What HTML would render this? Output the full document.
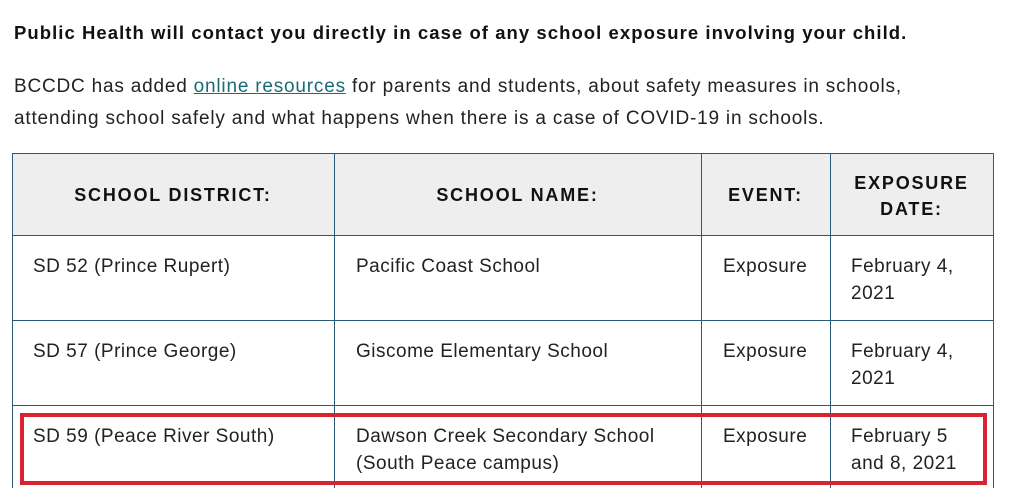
<!DOCTYPE html>
<html><head><meta charset="utf-8"><style>
body{margin:0;width:1012px;height:488px;overflow:hidden;background:#fff;font-family:"Liberation Sans",sans-serif;color:#222;position:relative}
.t{position:absolute;white-space:nowrap}
.v{position:absolute;background:#2a5a7a;width:1px}
.h{position:absolute;background:#2a5a7a;height:1px}
.hd{position:absolute;font-weight:bold;font-size:18px;letter-spacing:1.8px;text-align:center;color:#111}
.c{position:absolute;font-size:19px;line-height:27px;color:#222;letter-spacing:0.5px;white-space:nowrap}
a{color:#1a6b73;text-decoration:underline}
</style></head><body>
<div class="t" style="left:14px;top:22px;font-weight:bold;font-size:18.5px;letter-spacing:1.05px;color:#111">Public Health will contact you directly in case of any school exposure involving your child.</div>
<div class="t" style="left:14px;top:71px;font-size:19px;line-height:32px;letter-spacing:0.8px">BCCDC has added <a>online resources</a> for parents and students, about safety measures in schools,<br>attending school safely and what happens when there is a case of COVID-19 in schools.</div>
<div style="position:absolute;left:12px;top:153px;width:981px;height:82px;background:#eeeeee"></div>
<div class="h" style="left:12px;top:153px;width:982px"></div>
<div class="h" style="left:12px;top:235px;width:982px"></div>
<div class="h" style="left:12px;top:320px;width:982px"></div>
<div class="h" style="left:12px;top:405px;width:982px"></div>
<div class="v" style="left:12px;top:153px;height:335px"></div>
<div class="v" style="left:334px;top:153px;height:335px"></div>
<div class="v" style="left:701px;top:153px;height:335px"></div>
<div class="v" style="left:830px;top:153px;height:335px"></div>
<div class="v" style="left:993px;top:153px;height:335px"></div>
<div class="hd" style="left:12px;width:322px;top:185px">SCHOOL DISTRICT:</div>
<div class="hd" style="left:334px;width:367px;top:185px">SCHOOL NAME:</div>
<div class="hd" style="left:701px;width:129px;top:185px">EVENT:</div>
<div class="hd" style="left:830px;width:163px;top:170px;line-height:26px">EXPOSURE<br>DATE:</div>
<div class="c" style="left:33px;top:253px">SD 52 (Prince Rupert)</div>
<div class="c" style="left:356px;top:253px">Pacific Coast School</div>
<div class="c" style="left:723px;top:253px">Exposure</div>
<div class="c" style="left:851px;top:253px">February 4,<br>2021</div>
<div class="c" style="left:33px;top:338px">SD 57 (Prince George)</div>
<div class="c" style="left:356px;top:338px">Giscome Elementary School</div>
<div class="c" style="left:723px;top:338px">Exposure</div>
<div class="c" style="left:851px;top:338px">February 4,<br>2021</div>
<div class="c" style="left:33px;top:423px">SD 59 (Peace River South)</div>
<div class="c" style="left:356px;top:423px">Dawson Creek Secondary School<br>(South Peace campus)</div>
<div class="c" style="left:723px;top:423px">Exposure</div>
<div class="c" style="left:851px;top:423px">February 5<br>and 8, 2021</div>
<div style="position:absolute;left:20px;top:413px;width:959px;height:64px;border:4px solid #d9232e"></div>
</body></html>
